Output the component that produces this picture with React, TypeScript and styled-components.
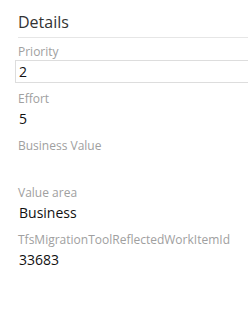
import styled, { createGlobalStyle } from 'styled-components';

const GlobalStyle = createGlobalStyle`
  html, body {
    margin: 0;
    padding: 0;
    background: #ffffff;
    overflow: hidden;
  }
  body {
    font-family: "Open Sans", "Noto Sans", sans-serif;
  }
`;

type Field = {
  label: string;
  value: string;
  focused?: boolean;
};

const fields: Field[] = [
  { label: 'Priority', value: '2', focused: true },
  { label: 'Effort', value: '5' },
  { label: 'Business Value', value: '' },
  { label: 'Value area', value: 'Business' },
  { label: 'TfsMigrationToolReflectedWorkItemId', value: '33683' },
];

function App() {
  return (
    <>
      <GlobalStyle />
      <Panel>
        <Title>Details</Title>
        <FieldList>
          {fields.map((f) => (
            <FieldRow key={f.label}>
              <Label>{f.label}</Label>
              <Value $focused={f.focused}>{f.value}</Value>
            </FieldRow>
          ))}
        </FieldList>
      </Panel>
    </>
  );
}

export default App;

const Panel = styled.div`
  width: 248px;
  height: 315px;
  padding-left: 18px;
  box-sizing: border-box;
  overflow: hidden;
`;

const Title = styled.h2`
  margin: 0;
  padding: 12px 0 5px 0;
  font-size: 16px;
  line-height: 20px;
  font-weight: 400;
  color: #333333;
  border-bottom: 1px solid #e6e6e6;
`;

const FieldList = styled.div`
  display: flex;
  flex-direction: column;
  gap: 8px;
  padding-top: 6px;
`;

const FieldRow = styled.div`
  display: flex;
  flex-direction: column;
`;

const Label = styled.div`
  font-size: 12px;
  line-height: 16px;
  color: #a0a0a0;
  white-space: nowrap;
`;

const Value = styled.div<{ $focused?: boolean }>`
  height: 21px;
  margin-left: -3px;
  margin-right: -6px;
  padding-left: 3px;
  font-size: 14px;
  line-height: 21px;
  color: #111111;
  border: 1px solid ${(p) => (p.$focused ? '#dddddd' : 'transparent')};
`;
